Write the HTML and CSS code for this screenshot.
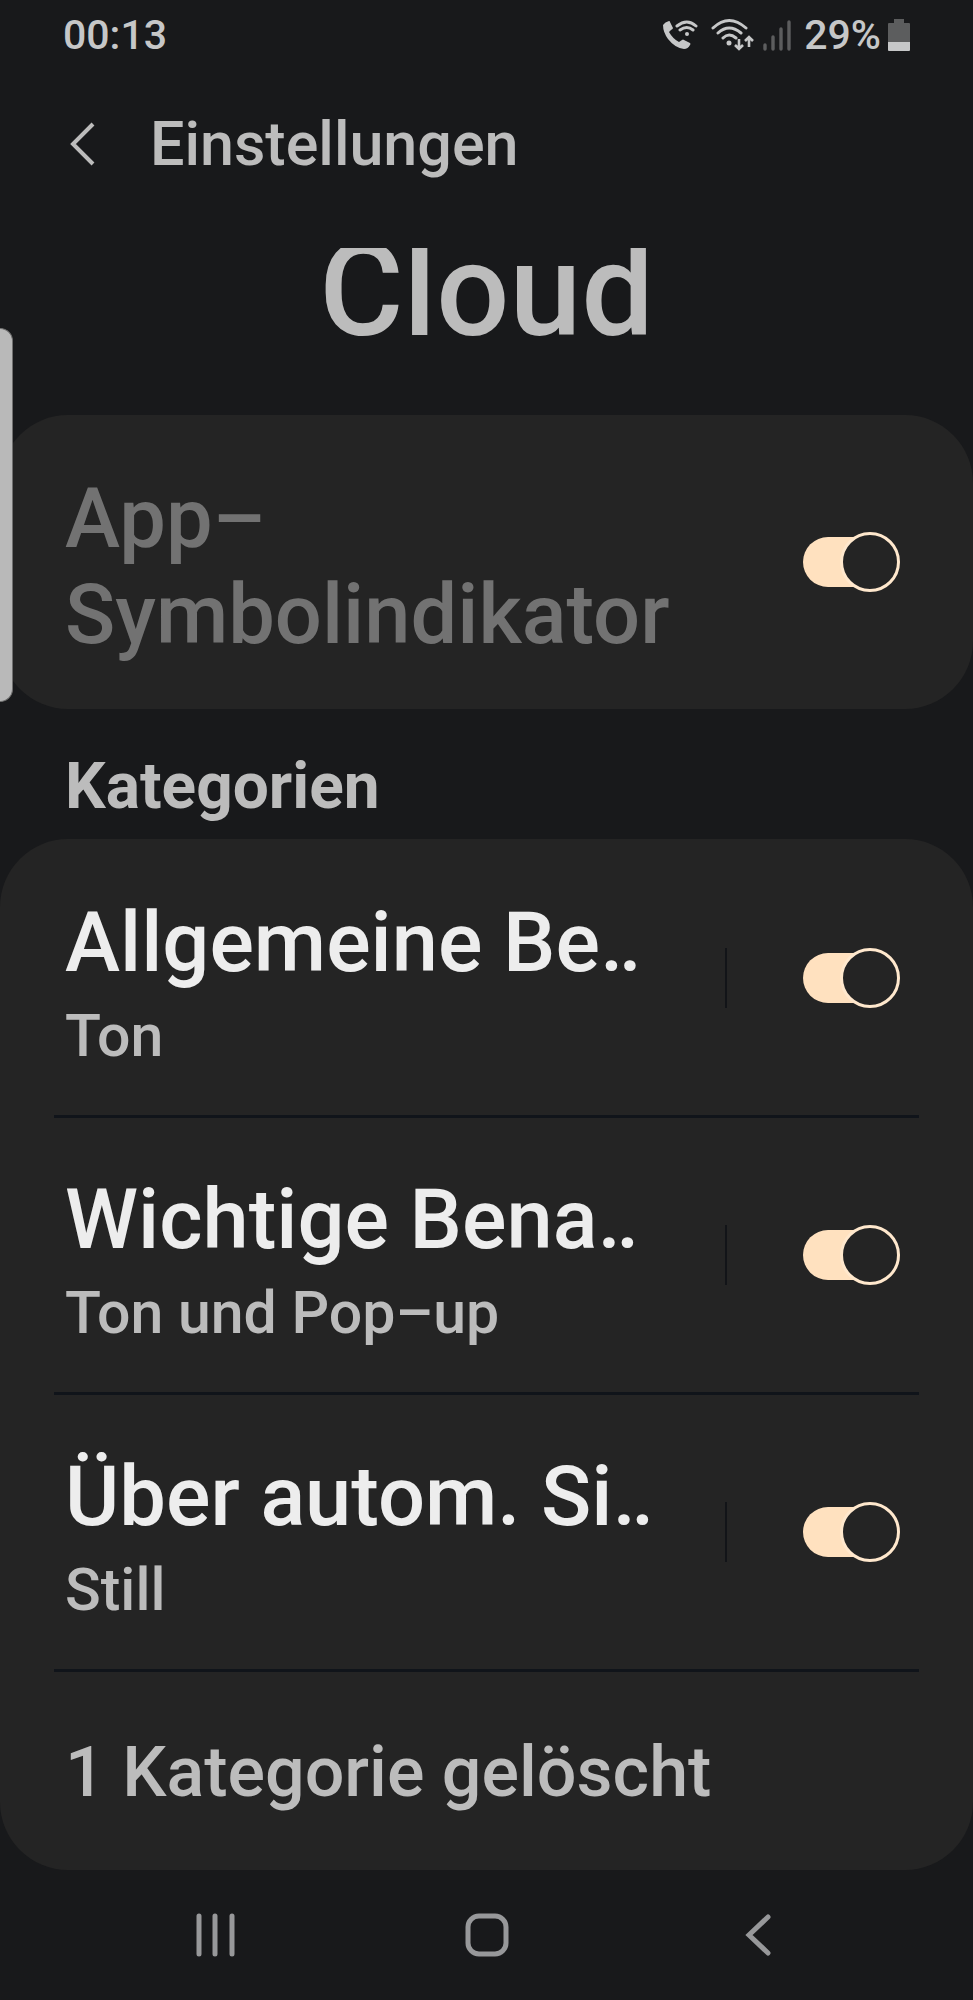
FILE: index.html
```html
<!DOCTYPE html>
<html lang="de">
<head>
<meta charset="utf-8">
<meta name="viewport" content="width=device-width, initial-scale=1">
<title>Einstellungen – Cloud</title>
<link rel="stylesheet" href="styles.css">
</head>
<body>
<div class="screen">
  <div class="status">
    <span class="status-time">00:13</span>
    <div class="status-icons">
      <svg class="icon-call" width="36" height="32" viewBox="0 0 36 32" aria-hidden="true">
        <path d="M1 6Q3 3 7 2Q8 2 8 3L11 9Q11 10 9 11L7 13Q11 20 17 23L20 21Q21 20 22 21L28 24Q29 25 28 26Q26 30 22 30Q13 29 6 20Q1 13 1 6Z" fill="currentColor"/>
        <path d="M15 7Q25-1 34 7M18 11Q25 6 31 11" fill="none" stroke="currentColor" stroke-width="3" stroke-linecap="round"/>
        <circle cx="25" cy="15" r="2" fill="currentColor"/>
      </svg>
      <svg class="icon-wifi" width="45" height="34" viewBox="0 0 45 34" aria-hidden="true">
        <path d="M3 10Q19-5 36 10M8 15Q19 5 31 15M13 20Q19 14 26 20" fill="none" stroke="currentColor" stroke-width="3" stroke-linecap="round"/>
        <circle cx="19" cy="25" r="2.5" fill="currentColor"/>
        <path d="M29 21V31M25 27L29 31L33 27M39 29V19M35 23L39 19L43 23" fill="none" stroke="currentColor" stroke-width="2.6"/>
      </svg>
      <svg class="icon-signal" width="29" height="34" viewBox="0 0 29 34" aria-hidden="true">
        <path d="M2 27V31M10 19V31M18 11V31M26 4V31" fill="none" stroke="#5c5d5e" stroke-width="3.4" stroke-linecap="round"/>
      </svg>
      <span class="status-battery">29%</span>
      <svg width="22" height="34" viewBox="0 0 22 34" aria-hidden="true">
        <path d="M6 1H16V5H21Q22 5 22 6V24H0V6Q0 5 1 5H6Z" fill="#5c5d5e"/>
        <path d="M0 24H22V32Q22 33 21 33H1Q0 33 0 32Z" fill="currentColor"/>
      </svg>
    </div>
  </div>

  <header class="bar">
    <button class="bar-back" type="button" aria-label="Zurück">
      <svg width="26" height="44" viewBox="0 0 26 44" aria-hidden="true">
        <path d="M23 2L3 22L23 42" fill="none" stroke="currentColor" stroke-width="4"/>
      </svg>
    </button>
    <span class="bar-title">Einstellungen</span>
  </header>

  <main class="content">
    <div class="hero"><h1 class="hero-title">Cloud</h1></div>

    <section class="card card-badge">
      <label class="badge-label" for="badge">App–<br>Symbolindikator</label>
      <input class="switch" id="badge" type="checkbox" role="switch" checked>
    </section>

    <h2 class="section-title">Kategorien</h2>

    <section class="card card-list">
      <div class="row">
        <label class="row-text" for="general"><span class="row-title">Allgemeine Be‥</span><span class="row-sub">Ton</span></label>
        <span class="row-rule"></span>
        <input class="switch" id="general" type="checkbox" role="switch" checked>
      </div>
      <div class="row">
        <label class="row-text" for="important"><span class="row-title">Wichtige Bena‥</span><span class="row-sub">Ton und Pop–up</span></label>
        <span class="row-rule"></span>
        <input class="switch" id="important" type="checkbox" role="switch" checked>
      </div>
      <div class="row">
        <label class="row-text" for="auto"><span class="row-title">Über autom. Si‥</span><span class="row-sub">Still</span></label>
        <span class="row-rule"></span>
        <input class="switch" id="auto" type="checkbox" role="switch" checked>
      </div>
      <p class="deleted">1 Kategorie gelöscht</p>
    </section>
  </main>

  <nav class="nav">
    <button class="nav-button" type="button" aria-label="Letzte Apps">
      <svg width="40" height="44" viewBox="0 0 40 44" aria-hidden="true">
        <path d="M3 3V41M19 3V41M36 3V41" fill="none" stroke="currentColor" stroke-width="5" stroke-linecap="round"/>
      </svg>
    </button>
    <button class="nav-button" type="button" aria-label="Startseite">
      <svg width="44" height="44" viewBox="0 0 44 44" aria-hidden="true">
        <rect x="3" y="3" width="38" height="38" rx="11" fill="none" stroke="currentColor" stroke-width="5"/>
      </svg>
    </button>
    <button class="nav-button" type="button" aria-label="Zurück">
      <svg width="26" height="44" viewBox="0 0 26 44" aria-hidden="true">
        <path d="M23 4L4 22L23 40" fill="none" stroke="currentColor" stroke-width="5" stroke-linecap="round"/>
      </svg>
    </button>
  </nav>

  <div class="edge-handle"></div>
</div>
</body>
</html>
```
FILE: styles.css
```css
*,
*::before,
*::after {
  box-sizing: border-box;
}

body {
  margin: 0;
  background: #18191b;
  color: #bcbcbc;
  font-family: Roboto, "Liberation Sans", sans-serif;
  font-weight: 500;
}

button {
  padding: 0;
  border: 0;
  background: none;
  color: inherit;
  display: flex;
  align-items: center;
  justify-content: center;
}

.screen {
  position: relative;
  min-height: 100vh;
  display: flex;
  flex-direction: column;
}

.status {
  display: flex;
  justify-content: space-between;
  padding: 11px 63px 0 63px;
  color: #c6c7c8;
  font-size: 41px;
  line-height: 48px;
}

.status-icons {
  display: flex;
  align-items: center;
}

.icon-call {
  margin-right: 12px;
}

.icon-wifi {
  margin-right: 8px;
}

.icon-signal {
  margin-right: 12px;
}

.status-battery {
  margin-right: 7px;
}

.bar {
  display: flex;
  align-items: center;
  gap: 54px;
  padding: 48px 70px 0;
}

.bar-title {
  font-size: 61px;
  line-height: 74px;
}

.content {
  padding-top: 67px;
}

.hero {
  height: 167px;
  overflow: hidden;
}

.hero-title {
  margin: -32px 0 0;
  font-size: 129px;
  font-weight: 500;
  line-height: 150px;
  text-align: center;
}

.card {
  background: #242424;
  border-radius: 68px;
}

.card-badge {
  display: flex;
  align-items: center;
  justify-content: space-between;
  padding: 0 73px 0 65px;
}

.badge-label {
  padding: 56px 0 46px;
  color: #727272;
  font-size: 83px;
  line-height: 96px;
}

.switch {
  appearance: none;
  position: relative;
  flex: none;
  width: 97px;
  height: 60px;
  margin: 0;
}

.switch::before {
  content: "";
  position: absolute;
  inset: 5px 10px 5px 0;
  border-radius: 25px;
  background: #ffe1bf;
}

.switch::after {
  content: "";
  position: absolute;
  top: 0;
  right: 0;
  width: 60px;
  height: 60px;
  border: 3px solid #ffe8cd;
  border-radius: 50%;
  background: #242424;
}

.section-title {
  margin: 0;
  padding: 40px 65px 14px;
  font-size: 64px;
  font-weight: 700;
  line-height: 76px;
}

.card-list {
  padding: 2px 54px 0;
}

.row {
  display: flex;
  align-items: center;
  padding: 0 19px 0 11px;
  border-bottom: 3px solid #10141a;
}

.row-text {
  flex: 1;
  display: flex;
  flex-direction: column;
  padding: 54px 0 34px;
}

.row-title {
  color: #ededed;
  font-size: 83px;
  line-height: 96px;
}

.row-sub {
  font-size: 59px;
  line-height: 90px;
}

.row-rule {
  width: 2px;
  height: 60px;
  margin-right: 76px;
  background: #121418;
}

.deleted {
  margin: 0;
  padding: 59px 11px 57px;
  font-size: 70px;
  line-height: 82px;
}

.nav {
  flex: 1;
  display: grid;
  grid-template-columns: repeat(3, 1fr);
  align-items: center;
  padding: 0 80px;
  color: #97989a;
}

.edge-handle {
  position: absolute;
  top: 328px;
  left: 0;
  width: 13px;
  height: 374px;
  border: 1px solid #707070;
  border-left: 0;
  border-radius: 0 13px 13px 0;
  background: #b9b9b9;
}
```
